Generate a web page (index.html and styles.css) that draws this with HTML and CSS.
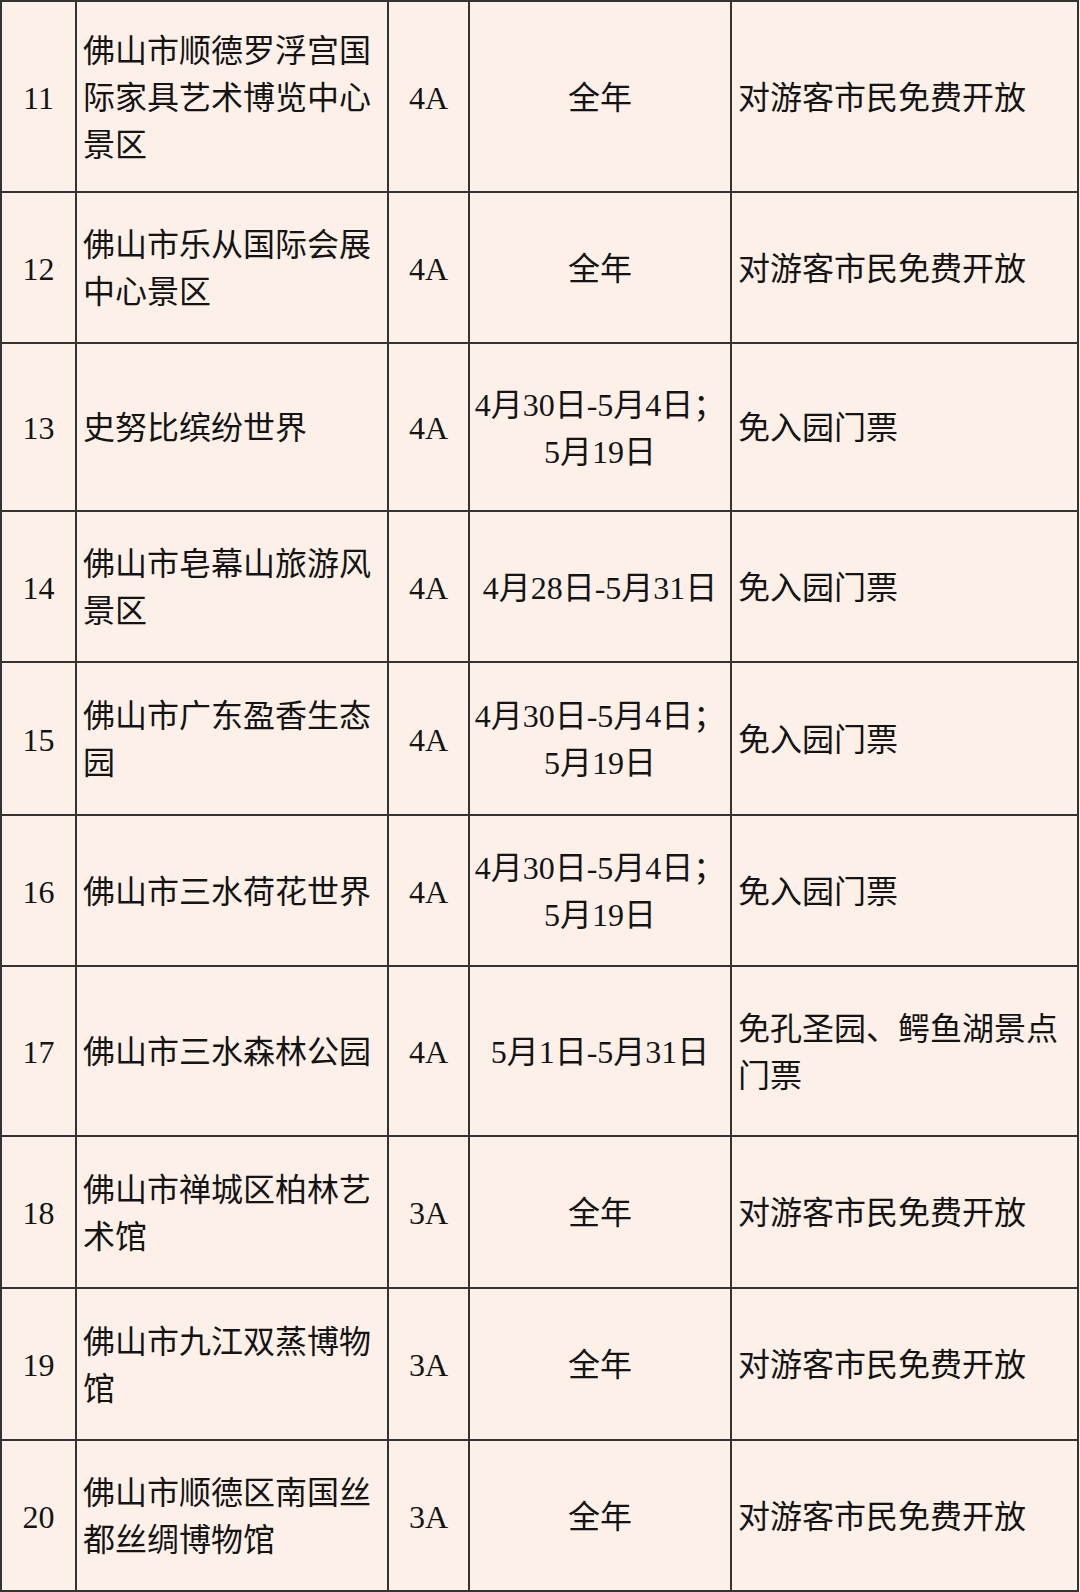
FILE: index.html
```html
<!DOCTYPE html>
<html lang="zh-CN">
<head>
<meta charset="utf-8">
<title>景区优惠</title>
<link rel="stylesheet" href="styles.css">
</head>
<body>
<div class="table">
  <div class="cell c">11</div>
  <div class="cell l">佛山市顺德罗浮宫国<br>际家具艺术博览中心<br>景区</div>
  <div class="cell c">4A</div>
  <div class="cell c">全年</div>
  <div class="cell l">对游客市民免费开放</div>

  <div class="cell c">12</div>
  <div class="cell l">佛山市乐从国际会展<br>中心景区</div>
  <div class="cell c">4A</div>
  <div class="cell c">全年</div>
  <div class="cell l">对游客市民免费开放</div>

  <div class="cell c">13</div>
  <div class="cell l">史努比缤纷世界</div>
  <div class="cell c">4A</div>
  <div class="cell c">4月30日-5月4日；<br>5月19日</div>
  <div class="cell l">免入园门票</div>

  <div class="cell c">14</div>
  <div class="cell l">佛山市皂幕山旅游风<br>景区</div>
  <div class="cell c">4A</div>
  <div class="cell c">4月28日-5月31日</div>
  <div class="cell l">免入园门票</div>

  <div class="cell c">15</div>
  <div class="cell l">佛山市广东盈香生态<br>园</div>
  <div class="cell c">4A</div>
  <div class="cell c">4月30日-5月4日；<br>5月19日</div>
  <div class="cell l">免入园门票</div>

  <div class="cell c">16</div>
  <div class="cell l">佛山市三水荷花世界</div>
  <div class="cell c">4A</div>
  <div class="cell c">4月30日-5月4日；<br>5月19日</div>
  <div class="cell l">免入园门票</div>

  <div class="cell c">17</div>
  <div class="cell l">佛山市三水森林公园</div>
  <div class="cell c">4A</div>
  <div class="cell c">5月1日-5月31日</div>
  <div class="cell l">免孔圣园、鳄鱼湖景点<br>门票</div>

  <div class="cell c">18</div>
  <div class="cell l">佛山市禅城区柏林艺<br>术馆</div>
  <div class="cell c">3A</div>
  <div class="cell c">全年</div>
  <div class="cell l">对游客市民免费开放</div>

  <div class="cell c">19</div>
  <div class="cell l">佛山市九江双蒸博物<br>馆</div>
  <div class="cell c">3A</div>
  <div class="cell c">全年</div>
  <div class="cell l">对游客市民免费开放</div>

  <div class="cell c">20</div>
  <div class="cell l">佛山市顺德区南国丝<br>都丝绸博物馆</div>
  <div class="cell c">3A</div>
  <div class="cell c">全年</div>
  <div class="cell l">对游客市民免费开放</div>
</div>
</body>
</html>
```

FILE: styles.css
```css
html, body {
  margin: 0;
  padding: 0;
  background: #fdf0e8;
}

.table {
  display: grid;
  grid-template-columns: 75px 312px 81px 262px 347px;
  grid-template-rows: 191px 151px 168px 151px 153px 151px 170px 152px 152px 151px;
  width: 1079px;
  box-sizing: border-box;
  border-left: 2px solid #333;
  border-top: 2px solid #333;
  font-family: "Liberation Serif", "Noto Sans CJK SC", serif;
  font-size: 32px;
  line-height: 47px;
  color: #141414;
}

.cell {
  box-sizing: border-box;
  border-right: 2px solid #333;
  border-bottom: 2px solid #333;
  display: flex;
  align-items: center;
  white-space: nowrap;
  padding: 3px 0 0 0;
}

.c {
  justify-content: center;
  text-align: center;
}

.l {
  justify-content: flex-start;
  text-align: left;
  padding-left: 6px;
}
```
